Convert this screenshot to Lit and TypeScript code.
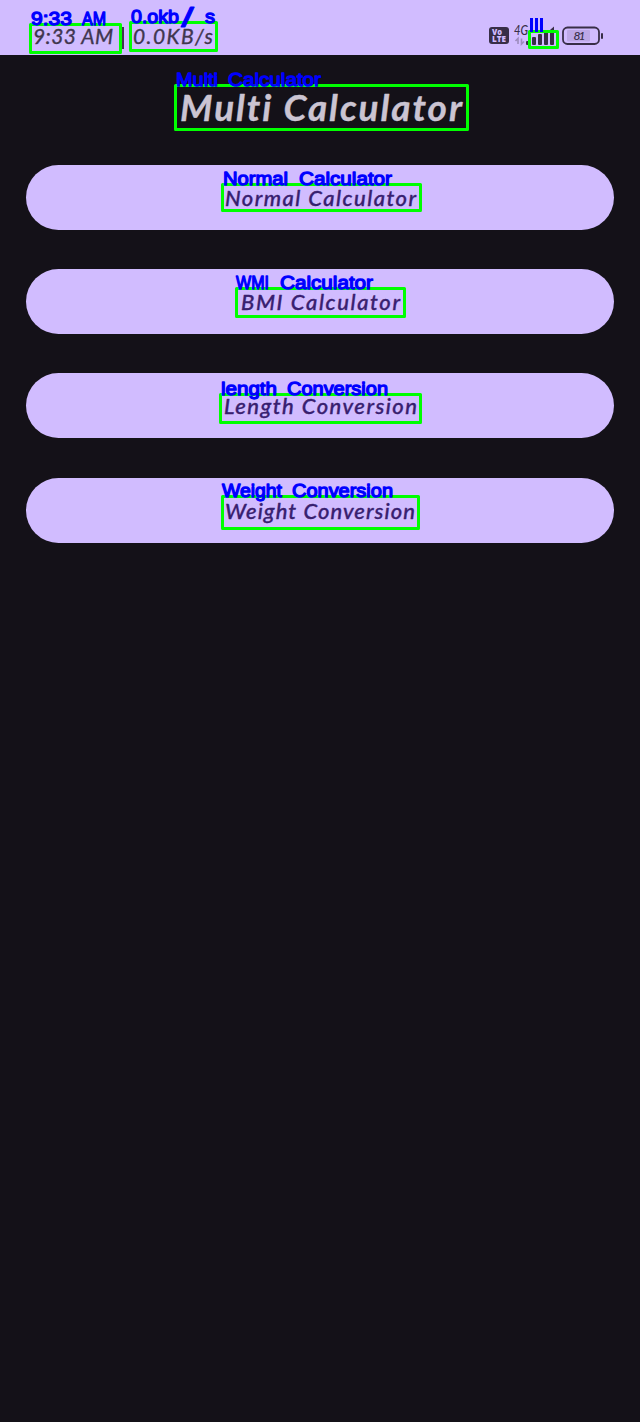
import { LitElement, html, svg, css } from "lit";
import { customElement, property } from "lit/decorators.js";

type Word = [text: string, x: number, width: number];
interface Mark {
  words: Word[];
  baseline: number;
  box: [number, number, number, number];
}

const MARKS: Mark[] = [
  { words: [["9:33", 31, 41], ["AM", 82, 24]], baseline: 25, box: [30.5, 24.5, 90, 28] },
  { words: [["0.okb", 131, 48], ["s", 205, 10]], baseline: 23, box: [130.5, 22.5, 86, 28] },
  { words: [["Multi", 176, 42], ["Calculator", 228, 93]], baseline: 86, box: [175.5, 85.5, 292, 44] },
  { words: [["Normal", 223, 65], ["Calculator", 299, 93]], baseline: 185, box: [222.5, 184.5, 198, 26] },
  { words: [["WMI", 236, 33], ["Calculator", 280, 93]], baseline: 289, box: [236.5, 288.5, 168, 28] },
  { words: [["length", 221, 56], ["Conversion", 287, 101]], baseline: 395, box: [220.5, 394.5, 200, 28] },
  { words: [["Weight", 222, 60], ["Conversion", 292, 101]], baseline: 497, box: [222.5, 496.5, 196, 32] },
];

@customElement("script-label")
export class ScriptLabel extends LitElement {
  @property() text = "";
  @property({ type: Number }) width = 100;
  @property({ type: Number }) size = 22;
  @property({ type: Number }) weight = 500;
  static styles = css`
    :host { display: block; }
    svg { display: block; overflow: visible; }
    text {
      font-family: Lato, "Noto Sans", sans-serif; font-style: italic; fill: currentColor;
      font-variant-ligatures: none; stroke: currentColor; stroke-width: 0.35; stroke-linejoin: round;
    }
  `;
  render() {
    const h = Math.round(this.size * 0.77);
    return html`<svg width=${this.width} height=${h}>
      <text x="0" y=${h} font-size=${this.size} font-weight=${this.weight}
        textLength=${this.width} lengthAdjust="spacing">${this.text}</text>
    </svg>`;
  }
}

@customElement("status-bar")
export class StatusBar extends LitElement {
  static styles = css`
    :host {
      display: flex; box-sizing: border-box; height: 55px; padding: 23px 36px 0 33px;
      background: #d1bcff; color: #40364f; align-items: flex-start;
    }
    .sep { width: 2px; height: 22px; margin: 4px 9px 0; background: #40364f; }
    .time { padding-top: 5px; }
    .icons { margin-left: auto; display: block; }
    .vo { font: 900 8px "Open Sans", sans-serif; fill: #d1bcff; }
    .net { font: italic 500 13px Lato, sans-serif; fill: #382e47; }
    .charge { font-size: 12px; }
  `;
  render() {
    return html`
      <script-label class="time" text="9:33 AM" width="80" size="21" weight="400"></script-label>
      <span class="sep"></span>
      <script-label class="time" text="0.0KB/s" width="80" size="21" weight="400"></script-label>
      <svg class="icons" width="115" height="26" viewBox="489 23 115 26">
        <rect x="489" y="27" width="20" height="17" rx="3" fill="#382e47" />
        <text class="vo" x="492" y="35" textLength="10" lengthAdjust="spacingAndGlyphs">Vo</text>
        <text class="vo" x="492" y="42.3" textLength="14" lengthAdjust="spacingAndGlyphs">LTE</text>
        <text class="net" x="514" y="35" textLength="14" lengthAdjust="spacingAndGlyphs">4G</text>
        <path d="M518 44V38.5L515.5 41M521.5 38.5V44L524 41.5" fill="none" stroke="#9d8bbd" stroke-width="1.6" />
        <g fill="#382e47">
          <rect x="526" y="41" width="3" height="4" rx="1" />
          <rect x="532" y="37" width="4" height="8" rx="1" />
          <rect x="538" y="34" width="4" height="11" rx="1" />
          <rect x="544" y="31" width="4" height="14" rx="1" />
          <path d="M550 30l4-3.5V44q0 1-1 1h-2q-1 0-1-1z" />
          <rect x="601" y="33" width="2" height="6" rx="1" />
        </g>
        <rect x="563" y="27.5" width="36" height="16.5" rx="4.5" fill="none" stroke="#382e47" stroke-width="1.8" />
        <rect x="567" y="30" width="23" height="11.5" rx="1" fill="#bda8e6" />
        <text class="net charge" x="573.5" y="40.3" textLength="12" lengthAdjust="spacing">81</text>
      </svg>`;
  }
}

@customElement("text-marks")
export class TextMarks extends LitElement {
  static styles = css`
    :host { display: block; position: absolute; left: 0; top: 0; pointer-events: none; }
    svg { display: block; }
    rect { fill: none; stroke: #00ff00; stroke-width: 3; stroke-linejoin: round; }
    text {
      font: 400 19px "Liberation Sans", sans-serif; fill: #0000ff;
      stroke: #0000ff; stroke-width: 1.3; stroke-linejoin: round;
    }
    path { stroke: #0000ff; stroke-width: 3; }
    .slash { font-size: 27px; stroke-width: 0.8; }
  `;
  render() {
    return html`<svg width="640" height="560" viewBox="0 0 640 560">
      ${MARKS.map((m) => svg`
        <rect x=${m.box[0]} y=${m.box[1]} width=${m.box[2]} height=${m.box[3]} />
        ${m.words.map(([t, x, w]) => svg`<text x=${x} y=${m.baseline} textLength=${w} lengthAdjust="spacingAndGlyphs">${t}</text>`)}
      `)}
      <text class="slash" x="181" y="27" textLength="13" lengthAdjust="spacingAndGlyphs">/</text>
      <rect x="529.5" y="31.5" width="28" height="16" />
      <path d="M531.5 18V32M536.5 18V32M541.5 18V32" />
    </svg>`;
  }
}

@customElement("app-root")
export class AppRoot extends LitElement {
  static styles = css`
    :host { display: block; position: relative; width: 640px; height: 1422px; background: #141118; overflow: hidden; }
    h1 { margin: 0; height: 110px; box-sizing: border-box; padding: 38px 0 0 180px; color: #cbc4d2; }
    .menu { display: flex; flex-direction: column; gap: 39.2px; padding: 0 26px; }
    button {
      display: flex; justify-content: center; align-items: flex-start; box-sizing: border-box;
      height: 65px; padding: 24px 0 0; border: 0; border-radius: 33px; background: #d1bcff; color: #38206f;
    }
  `;
  render() {
    const items: [string, number][] = [
      ["Normal Calculator", 191], ["BMI Calculator", 159],
      ["Length Conversion", 193], ["Weight Conversion", 190],
    ];
    return html`
      <status-bar></status-bar>
      <h1><script-label text="Multi Calculator" width="282" size="37" weight="700"></script-label></h1>
      <div class="menu">
        ${items.map(([t, w]) => html`<button><script-label text=${t} width=${w} size="22" weight="500"></script-label></button>`)}
      </div>
      <text-marks></text-marks>`;
  }
}
